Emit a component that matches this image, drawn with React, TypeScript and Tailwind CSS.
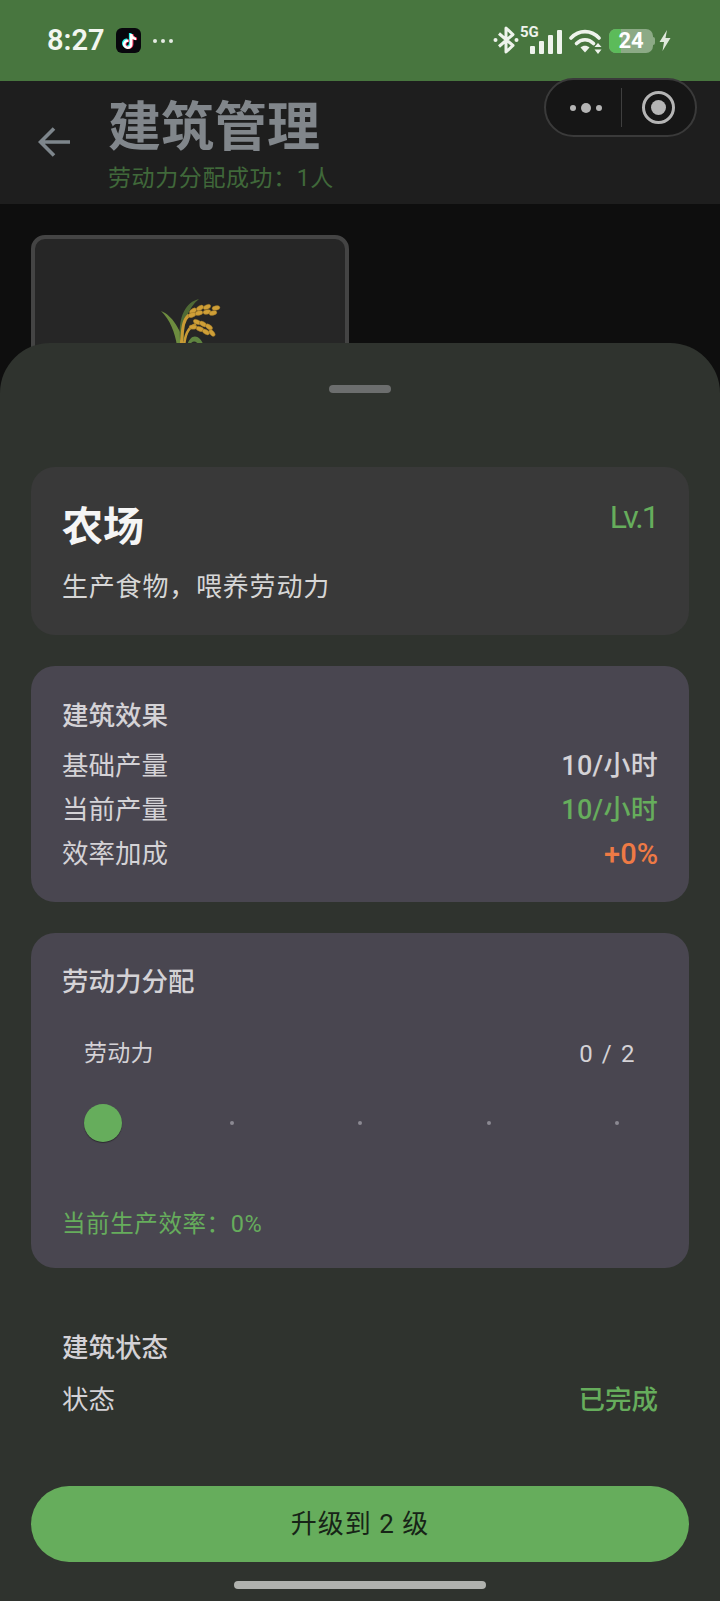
import { FaTiktok } from 'react-icons/fa6';

const FONT = "font-['Roboto','Noto_Sans_CJK_SC',sans-serif]";

function StatusIcons() {
  return (
    <div className="flex items-center">
      {/* bluetooth */}
      <svg width="26" height="30" viewBox="0 0 26 30" className="mt-[-2px]">
        <path d="M6 8.5 L20 20.5 L13 27 V3 L20 9.5 L6 21.5" fill="none" stroke="#eef3ec" strokeWidth="3" strokeLinejoin="round" />
        <circle cx="2.5" cy="15" r="2" fill="#eef3ec" />
        <circle cx="23.5" cy="15" r="2" fill="#eef3ec" />
      </svg>
      {/* 5G + signal */}
      <div className="relative ml-[1px] h-[28px] w-[42px]">
        <span className="absolute left-0 top-[-4px] text-[15px] font-bold leading-[18px] text-[#eef3ec]">5G</span>
        <div className="absolute bottom-[1px] left-[10px] flex items-end gap-[4px]">
          <div className="h-[8px] w-[5px] rounded-[1px] bg-[#eef3ec]" />
          <div className="h-[13px] w-[5px] rounded-[1px] bg-[#eef3ec]" />
          <div className="h-[19px] w-[5px] rounded-[1px] bg-[#eef3ec]" />
          <div className="h-[24px] w-[5px] rounded-[1px] bg-[#eef3ec]" />
        </div>
      </div>
      {/* wifi */}
      <svg width="34" height="26" viewBox="0 0 34 26" className="ml-[7px]">
        <path d="M2 10 C10 1.5 22 1.5 30 10" fill="none" stroke="#eef3ec" strokeWidth="3.6" strokeLinecap="round" />
        <path d="M7.5 15.5 C12.5 10.5 19.5 10.5 24.5 15.5" fill="none" stroke="#eef3ec" strokeWidth="3.6" strokeLinecap="round" />
        <path d="M11.5 19.5 C14 17 18 17 20.5 19.5 L16 24.5 Z" fill="#eef3ec" />
        <path d="M29 15 L32.5 19 H25.5 Z M29 26 L32.5 21.5 H25.5 Z" fill="#eef3ec" />
      </svg>
      {/* battery */}
      <div className="relative ml-[6px] flex h-[24px] w-[44px] items-center justify-center overflow-hidden rounded-[7px] bg-[#8caa86]">
        <div className="absolute inset-y-0 left-0 w-[12px] bg-[#5cbb5a]" />
        <span className="relative text-[22px] font-bold leading-none text-white">24</span>
      </div>
      <div className="h-[8px] w-[2px] rounded-r-[2px] bg-[#8caa86]" />
      {/* charging */}
      <svg width="12" height="21" viewBox="0 0 12 21" className="ml-[4px]">
        <path d="M8 0 L0.5 12 H5 L3.5 21 L11.5 8 H6.5 Z" fill="#dfe8dc" />
      </svg>
    </div>
  );
}

function Wheat() {
  const topGrains = [
    [43, 21, -35], [50, 18, -30], [57, 17, -25], [66, 18, -10],
    [42, 25, -20], [49, 23, -15], [57, 22, -10], [63, 23, -15],
  ];
  const lowGrains = [
    [47, 32, 25], [53, 34, 30], [59, 37, 35],
    [43, 37, 0], [50, 39, 20], [56, 42, 30], [62, 43, 50],
  ];
  return (
    <svg width="80" height="60" viewBox="0 0 80 60">
      <path d="M11 21 C22 25 31 40 35 56 L27 56 C25 42 20 30 11 21 Z" fill="#6d8c3f" />
      <path d="M49 9 C36 12 28 26 30 50 L34 50 C33 32 38 18 49 9 Z" fill="#4f6a35" />
      <path d="M31 56 C33 44 31 32 39 25" fill="none" stroke="#c99a34" strokeWidth="3" />
      <path d="M34 56 C35 46 37 38 46 34" fill="none" stroke="#c99a34" strokeWidth="2.6" />
      <path d="M37 56 C40 44 49 43 54 56 L50 56 C46 50 42 50 39 56 Z" fill="#5f8440" />
      {[...topGrains, ...lowGrains].map(([x, y, r], i) => (
        <ellipse key={i} cx={x} cy={y} rx="4" ry="2.3" fill="#cf9f37" stroke="#8f6c24" strokeWidth="0.4" transform={`rotate(${r} ${x} ${y})`} />
      ))}
    </svg>
  );
}

function Row({ label, value, color }: { label: string; value: string; color: string }) {
  return (
    <div className="flex h-[44px] items-center justify-between text-[26.5px] leading-none text-[#d4d2d6]">
      <span>{label}</span>
      <span className={color}>{value}</span>
    </div>
  );
}

function SliderStop() {
  return (
    <div className="flex w-[38px] justify-center">
      <div className="h-[4px] w-[4px] rounded-full bg-[#8b8992]" />
    </div>
  );
}

export default function App() {
  return (
    <div className={`relative h-[1601px] w-[720px] overflow-hidden bg-[#0e0e0e] ${FONT}`}>
      {/* status bar */}
      <div className="flex h-[81px] items-center justify-between bg-[#48763f] pl-[47px] pr-[49px]">
        <div className="flex items-center">
          <span className="text-[29px] font-semibold leading-none text-[#f2f6f0]">8:27</span>
          <div className="relative ml-[11px] flex h-[25px] w-[25px] items-center justify-center rounded-[6px] bg-[#08070d]">
            <FaTiktok className="absolute left-[5px] top-[5px] text-[15px] text-[#25f4ee]" />
            <FaTiktok className="absolute left-[7px] top-[6px] text-[15px] text-[#fe2c55]" />
            <FaTiktok className="absolute left-[6px] top-[5.5px] text-[15px] text-white" />
          </div>
          <div className="ml-[12px] flex gap-[4px]">
            <div className="h-[4px] w-[4px] rounded-full bg-[#e6ece4]" />
            <div className="h-[4px] w-[4px] rounded-full bg-[#e6ece4]" />
            <div className="h-[4px] w-[4px] rounded-full bg-[#e6ece4]" />
          </div>
        </div>
        <StatusIcons />
      </div>

      {/* header */}
      <div className="flex h-[123px] items-center bg-[#1e1e1e] pl-[38px]">
        <svg width="34" height="32" viewBox="0 0 34 32" className="mt-[-1px]">
          <path d="M32 16 H3 M16 2.5 L2.5 16 L16 29.5" fill="none" stroke="#7e868c" strokeWidth="3.6" />
        </svg>
        <div className="ml-[36px] mt-[8px]">
          <div className="text-[53px] font-semibold leading-[60px] text-[#81868b]">建筑管理</div>
          <div className="mt-[5px] text-[23px] leading-[32px] tracking-[0.6px] text-[#40693a]">劳动力分配成功：1人</div>
        </div>
      </div>

      {/* building grid behind the sheet */}
      <div className="px-[31px] pt-[31px]">
        <div className="flex h-[300px] w-[318px] justify-center rounded-[14px] border-4 border-[#444444] bg-[#262626] pt-[51px]">
          <Wheat />
        </div>
      </div>

      {/* capsule */}
      <div className="absolute left-[544px] top-[78px] flex h-[59px] w-[153px] items-center rounded-full border-2 border-[#3a3a3a] bg-[#161616]">
        <div className="flex w-[75px] items-center justify-center gap-[5px] pl-[4px]">
          <div className="h-[6px] w-[6px] rounded-full bg-[#b5b5b5]" />
          <div className="h-[10px] w-[10px] rounded-full bg-[#b5b5b5]" />
          <div className="h-[6px] w-[6px] rounded-full bg-[#b5b5b5]" />
        </div>
        <div className="h-[39px] w-[1px] bg-[#3f3f3f]" />
        <div className="flex flex-1 items-center justify-center">
          <div className="flex h-[33px] w-[33px] items-center justify-center rounded-full border-[3px] border-[#b5b5b5]">
            <div className="h-[15px] w-[15px] rounded-full bg-[#b5b5b5]" />
          </div>
        </div>
      </div>

      {/* bottom sheet */}
      <div className="absolute inset-x-0 bottom-0 top-[343px] rounded-t-[50px] bg-[#2f332e] px-[31px]">
        <div className="mx-auto mt-[42px] h-[8px] w-[62px] rounded-full bg-[#6c6e6e]" />

        <div className="mt-[74px] h-[168px] rounded-[24px] bg-[#393939] px-[31px] pt-[35px]">
          <div className="flex items-start justify-between">
            <span className="text-[41px] font-semibold leading-[50px] text-[#f5f5f5]">农场</span>
            <span className="mt-[-4px] text-[32px] leading-[38px] tracking-[-1.8px] text-[#66ad5c]">Lv.1</span>
          </div>
          <div className="mt-[17px] text-[26px] leading-[36px] tracking-[0.8px] text-[#d6d6d6]">生产食物，喂养劳动力</div>
        </div>

        <div className="mt-[31px] h-[236px] rounded-[24px] bg-[#494650] px-[31px] pt-[32px]">
          <div className="text-[26.5px] font-medium leading-[36px] text-[#d4d2d6]">建筑效果</div>
          <div className="mt-[10px]">
            <Row label="基础产量" value="10/小时" color="text-[27px] font-medium tracking-[0.3px] text-[#d4d2d6]" />
            <Row label="当前产量" value="10/小时" color="text-[27px] font-medium tracking-[0.3px] text-[#66ad5c]" />
            <Row label="效率加成" value="+0%" color="text-[29px] font-medium text-[#ee7a45]" />
          </div>
        </div>

        <div className="mt-[31px] h-[335px] rounded-[24px] bg-[#494650] px-[31px] pt-[31px]">
          <div className="text-[26.5px] font-medium leading-[36px] text-[#d4d2d6]">劳动力分配</div>
          <div className="mt-[38px] flex items-center justify-between px-[22px] text-[23px] leading-[32px] text-[#d4d2d6]">
            <span className="tracking-[0.3px]">劳动力</span>
            <span className="text-[24px] tracking-[1.6px]">0 / 2</span>
          </div>
          <div className="mt-[34px] flex h-[38px] items-center justify-between px-[22px]">
            <div className="h-[38px] w-[38px] rounded-full bg-[#66ad5c] shadow-[0_1px_1px_rgba(0,0,0,0.4)]" />
            <SliderStop />
            <SliderStop />
            <SliderStop />
            <SliderStop />
          </div>
          <div className="mt-[66px] text-[23.5px] leading-[32px] tracking-[0.6px] text-[#66ad5c]">当前生产效率：0%</div>
        </div>

        <div className="mt-[62px] px-[31px]">
          <div className="text-[26.5px] font-medium leading-[36px] text-[#d4d2d6]">建筑状态</div>
          <div className="mt-[16px] flex items-center justify-between text-[26.5px] leading-[36px]">
            <span className="text-[#d4d2d6]">状态</span>
            <span className="font-medium text-[#66ad5c]">已完成</span>
          </div>
        </div>

        <div className="mt-[68px] flex h-[76px] items-center justify-center rounded-full bg-[#66ad5c] text-[26px] tracking-[1px] text-[#172417]">
          升级到 2 级
        </div>
        <div className="mx-auto mt-[19px] h-[8px] w-[252px] rounded-full bg-[#b0b2ae]" />
      </div>
    </div>
  );
}
